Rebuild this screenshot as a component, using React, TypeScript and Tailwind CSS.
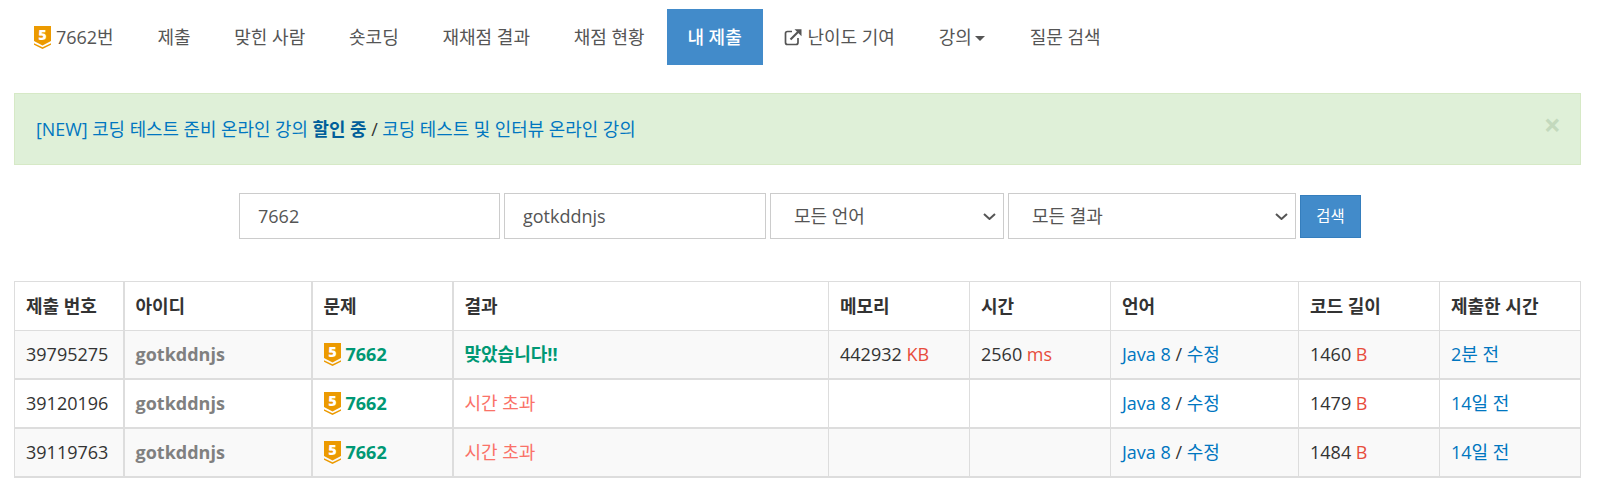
import React from "react";

const FONT = '"Open Sans","Noto Sans CJK KR",sans-serif';

function Tier({ className = "" }: { className?: string }) {
  return (
    <svg viewBox="0 0 17 23" className={`w-[17px] h-[23px] shrink-0 ${className}`}>
      <path d="M0 0H17V15L8.5 19.5L0 15Z" fill="#ec9a00" />
      <path d="M0 17.2L8.5 21.2L17 17.2V18.8L8.5 23L0 18.8Z" fill="#ec9a00" />
      <text x="8.5" y="13.6" textAnchor="middle" fontSize="14.5" fontWeight="800" fill="#fff" fontFamily="Open Sans">5</text>
    </svg>
  );
}

function NavItem({ children, active = false }: { children: React.ReactNode; active?: boolean }) {
  return (
    <div
      className={`h-[56px] flex items-center whitespace-nowrap ${
        active ? "w-[96px] justify-center bg-[#428bca] text-white font-medium" : "px-[21.9px] text-[#555]"
      }`}
    >
      {children}
    </div>
  );
}

function Select({ label, className }: { label: string; className: string }) {
  return (
    <div className={`relative h-[46px] ${className}`}>
      <select className="w-full h-full appearance-none border border-[#ccc] pl-[23px] pr-[30px] bg-white">
        <option>{label}</option>
      </select>
      <svg viewBox="0 0 13 7" className="absolute right-[8px] top-[20px] w-[13px] h-[7px]" fill="none" stroke="#555" strokeWidth="2">
        <path d="M1 1L6.5 6L12 1" />
      </svg>
    </div>
  );
}

const rows = [
  { id: "39795275", res: "맞았습니다!!", ok: true, mem: "442932", time: "2560", len: "1460", ago: "2분 전", rowCls: "h-[48px] bg-[#f9f9f9]" },
  { id: "39120196", res: "시간 초과", ok: false, mem: "", time: "", len: "1479", ago: "14일 전", rowCls: "h-[49px] bg-white" },
  { id: "39119763", res: "시간 초과", ok: false, mem: "", time: "", len: "1484", ago: "14일 전", rowCls: "h-[49px] bg-[#f9f9f9]" },
];

const th = "border border-[#ddd] px-[11px] text-left font-bold text-[#333] align-middle";
const td = "border border-[#ddd] px-[11px] align-middle";
const thick = "border-r-2";

export default function App() {
  return (
    <div className="w-[1607px] h-[501px] bg-white overflow-hidden text-[18px] text-[#333]" style={{ fontFamily: FONT }}>
      <nav className="flex pl-[12px] pt-[9px]">
        <NavItem>
          <Tier className="mr-[5px]" />
          7662번
        </NavItem>
        <NavItem>제출</NavItem>
        <NavItem>맞힌 사람</NavItem>
        <NavItem>숏코딩</NavItem>
        <NavItem>재채점 결과</NavItem>
        <NavItem>채점 현황</NavItem>
        <NavItem active>내 제출</NavItem>
        <NavItem>
          <svg viewBox="0 0 18 18" className="w-[18px] h-[18px] mr-[5px]" fill="none" stroke="#555" strokeWidth="1.7">
            <path d="M8 3.5H3.5A2 2 0 0 0 1.5 5.5V14.5A2 2 0 0 0 3.5 16.5H12A2 2 0 0 0 14 14.5V10" />
            <path d="M6.5 11.5L15 3" strokeWidth="2.2" />
            <path d="M10.5 1.2H17.5V8.2Z" fill="#555" stroke="none" />
          </svg>
          난이도 기여
        </NavItem>
        <NavItem>
          강의
          <span className="ml-[3px] mr-[1px] mt-[2px] w-0 h-0 border-x-[5px] border-x-transparent border-t-[5px] border-t-[#555]" />
        </NavItem>
        <NavItem>질문 검색</NavItem>
      </nav>

      <div className="relative ml-[14px] mt-[28px] w-[1567px] h-[72px] bg-[#dff0d8] border border-[#d6e9c6] flex items-center pl-[21px] pt-[1px] text-[17.88px] text-[#0076c0]">
        <span>
          [NEW] 코딩 테스트 준비 온라인 강의 <b className="font-bold text-[#005e9a]">할인 중</b> <span className="text-[#333]">/</span> 코딩 테스트 및 인터뷰 온라인 강의
        </span>
        <span className="absolute right-[19px] top-[11px] text-[30px] font-bold text-[#c3d9bd] leading-[40px]">×</span>
      </div>

      <form className="flex items-start gap-[4px] ml-[239px] mt-[28px] text-[#555]">
        <input readOnly value="7662" className="w-[261px] h-[46px] border border-[#ccc] px-[18px] bg-white" />
        <input readOnly value="gotkddnjs" className="w-[262px] h-[46px] border border-[#ccc] px-[18px] bg-white" />
        <Select label="모든 언어" className="w-[234px]" />
        <Select label="모든 결과" className="w-[288px]" />
        <div className="w-[61px] h-[43px] mt-[2px] bg-[#428bca] border border-[#357ebd] text-white text-[15.4px] flex items-center justify-center">
          검색
        </div>
      </form>

      <table className="ml-[14px] mt-[42px] w-[1566px] table-fixed border-collapse border-b-2 border-b-[#ddd]">
        <colgroup>
          <col className="w-[109px]" />
          <col className="w-[188px]" />
          <col className="w-[141px]" />
          <col className="w-[376px]" />
          <col className="w-[141px]" />
          <col className="w-[141px]" />
          <col className="w-[188px]" />
          <col className="w-[141px]" />
          <col className="w-[141px]" />
        </colgroup>
        <thead>
          <tr className="h-[49px]">
            <th className={`${th} ${thick}`}>제출 번호</th>
            <th className={`${th} ${thick}`}>아이디</th>
            <th className={`${th} ${thick}`}>문제</th>
            <th className={th}>결과</th>
            <th className={th}>메모리</th>
            <th className={th}>시간</th>
            <th className={th}>언어</th>
            <th className={th}>코드 길이</th>
            <th className={th}>제출한 시간</th>
          </tr>
        </thead>
        <tbody>
          {rows.map((r) => (
            <tr key={r.id} className={`border-b-2 border-b-[#ddd] ${r.rowCls}`}>
              <td className={`${td} ${thick}`}>{r.id}</td>
              <td className={`${td} ${thick} font-bold text-[#808080]`}>gotkddnjs</td>
              <td className={`${td} ${thick}`}>
                <span className="flex items-center gap-[5px] font-bold text-[#009874]">
                  <Tier />
                  7662
                </span>
              </td>
              <td className={`${td} ${r.ok ? "font-bold text-[#009874]" : "text-[#fa7268]"}`}>{r.res}</td>
              <td className={td}>
                {r.mem && (
                  <>
                    {r.mem} <span className="text-[#e74c3c]">KB</span>
                  </>
                )}
              </td>
              <td className={td}>
                {r.time && (
                  <>
                    {r.time} <span className="text-[#e74c3c]">ms</span>
                  </>
                )}
              </td>
              <td className={td}>
                <span className="text-[#0076c0]">Java 8</span> / <span className="text-[#0076c0]">수정</span>
              </td>
              <td className={td}>
                {r.len} <span className="text-[#e74c3c]">B</span>
              </td>
              <td className={`${td} text-[#0076c0]`}>{r.ago}</td>
            </tr>
          ))}
        </tbody>
      </table>
    </div>
  );
}
